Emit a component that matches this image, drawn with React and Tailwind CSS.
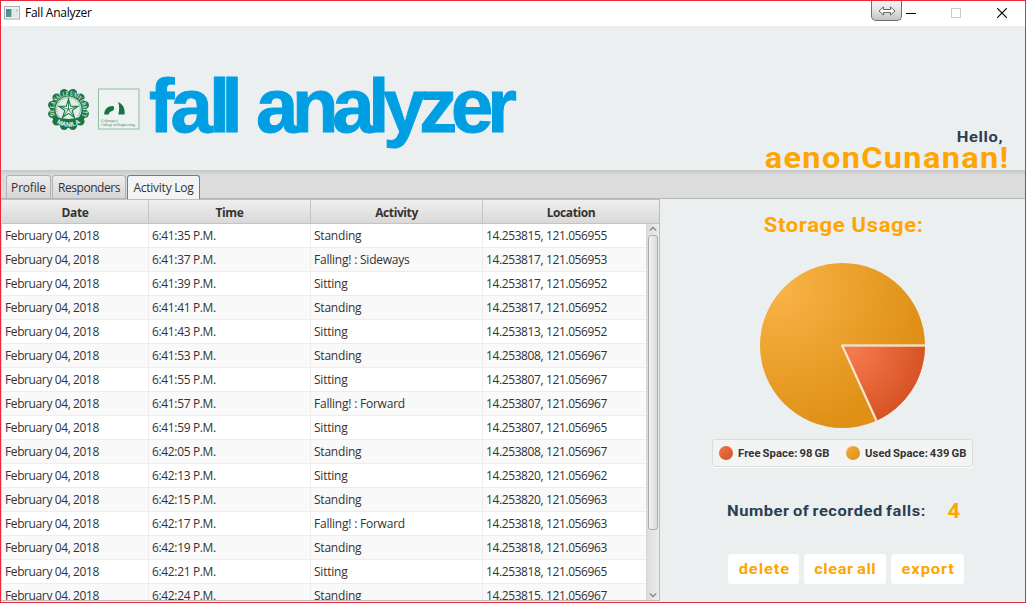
const ROWS = [
  ['6:41:35 P.M.', 'Standing', '14.253815, 121.056955'],
  ['6:41:37 P.M.', 'Falling! : Sideways', '14.253817, 121.056953'],
  ['6:41:39 P.M.', 'Sitting', '14.253817, 121.056952'],
  ['6:41:41 P.M.', 'Standing', '14.253817, 121.056952'],
  ['6:41:43 P.M.', 'Sitting', '14.253813, 121.056952'],
  ['6:41:53 P.M.', 'Standing', '14.253808, 121.056967'],
  ['6:41:55 P.M.', 'Sitting', '14.253807, 121.056967'],
  ['6:41:57 P.M.', 'Falling! : Forward', '14.253807, 121.056967'],
  ['6:41:59 P.M.', 'Sitting', '14.253807, 121.056965'],
  ['6:42:05 P.M.', 'Standing', '14.253808, 121.056967'],
  ['6:42:13 P.M.', 'Sitting', '14.253820, 121.056962'],
  ['6:42:15 P.M.', 'Standing', '14.253820, 121.056963'],
  ['6:42:17 P.M.', 'Falling! : Forward', '14.253818, 121.056963'],
  ['6:42:19 P.M.', 'Standing', '14.253818, 121.056963'],
  ['6:42:21 P.M.', 'Sitting', '14.253818, 121.056965'],
  ['6:42:24 P.M.', 'Standing', '14.253815, 121.056967'],
];

function AppIcon() {
  return (
    <svg width="16" height="14" viewBox="0 0 16 14">
      <defs>
        <linearGradient id="app" x1="0" y1="0" x2="1" y2="1">
          <stop offset="0" stopColor="#4f86a8" />
          <stop offset="1" stopColor="#4fa36c" />
        </linearGradient>
      </defs>
      <rect x="0.5" y="0.5" width="15" height="12.5" fill="#f1f3f3" stroke="#a9adad" />
      <rect x="2" y="3" width="5.5" height="8" fill="url(#app)" />
      <rect x="8.5" y="3" width="3" height="8" fill="#e0e5e7" />
      <rect x="12" y="3" width="2" height="3" fill="#b9d3ea" />
      <rect x="12" y="6" width="2" height="5" fill="#dfeadf" />
    </svg>
  );
}

function TitleBar() {
  return (
    <div className="flex h-[25px] shrink-0 items-start bg-white">
      <div className="mt-[5px] ml-[3px]"><AppIcon /></div>
      <span className="mt-[3px] ml-[5px] text-[12px] leading-[18px] tracking-[-0.25px] text-black">Fall Analyzer</span>
      <div className="ml-auto flex h-[20px] w-[31px] items-center justify-center rounded-b-[5px] border border-t-0 border-[#6f6f6f] bg-linear-to-b from-[#f4f4f4] via-[#e2e2e2] to-[#c4c4c4]">
        <svg width="18" height="10" viewBox="0 0 18 10" fill="#fff" stroke="#666" strokeWidth="1">
          <path d="M1 5 L5.5 1 V3.5 H12.5 V1 L17 5 L12.5 9 V6.5 H5.5 V9 Z" />
        </svg>
      </div>
      <svg className="ml-[4px]" width="10" height="25" viewBox="0 0 10 25"><path d="M0 12.5H10" stroke="#000" /></svg>
      <svg className="ml-[35px]" width="10" height="25" viewBox="0 0 10 25"><rect x="0.5" y="7.5" width="9" height="9" fill="none" stroke="#ccc" /></svg>
      <svg className="mr-[18px] ml-[36px]" width="10" height="25" viewBox="0 0 10 25"><path d="M0.2 7.2L9.8 16.8M9.8 7.2L0.2 16.8" stroke="#000" strokeWidth="1.1" /></svg>
    </div>
  );
}

function Seal() {
  const petals = Array.from({ length: 12 }, (_, i) => {
    const a = (i * Math.PI) / 6 + Math.PI / 12;
    return [21 + 16.8 * Math.cos(a), 21 + 16.8 * Math.sin(a)];
  });
  return (
    <svg width="42" height="42" viewBox="0.5 -0.5 42 42">
      <defs>
        <path id="arcTop" d="M7.4 27 A14.6 14.6 0 1 1 34.6 27" />
        <path id="arcBottom" d="M6 31.500 A20 20 0 0 0 36 31.500" />
      </defs>
      {petals.map(([x, y]) => <circle key={x + '-' + y} cx={x} cy={y} r="4.2" fill="#1a7744" />)}
      <circle cx="21" cy="21" r="18.2" fill="#1a7744" />
      <text fontSize="6.500" fontWeight="700" fill="#e6f0eb" fontFamily="Liberation Serif, serif" textLength="57" lengthAdjust="spacingAndGlyphs"><textPath href="#arcTop">DE LA SALLE UNIVERSITY</textPath></text>
      <circle cx="21" cy="21" r="13" fill="#e3ece8" />
      <circle cx="21" cy="21" r="11.8" fill="none" stroke="#5f9f7b" strokeWidth="1" strokeDasharray="1.2 0.8" />
      <path d="M5 27 Q21 34 37 27 L34 34.500 Q21 43 8 34.500 Z" fill="#1a7744" />
      <text fontSize="6.500" fontWeight="700" fill="#edf4f0" fontFamily="Liberation Sans, sans-serif"><textPath href="#arcBottom" startOffset="50%" textAnchor="middle">MANILA</textPath></text>
      <path d="M21 10.500 L23.200 17.800 L30.500 17.800 L24.600 22 L27 29 L21 24.800 L15 29 L17.400 22 L11.500 17.800 L18.800 17.800 Z" fill="#f2f7f4" stroke="#1a7744" strokeWidth="1.100" />
      <path d="M21 12V21L29 18M21 21L26 27.5M21 21L16 27.5M21 21L13 18" stroke="#1a7744" strokeWidth="0.9" fill="none" />
    </svg>
  );
}

function CollegeLogo() {
  return (
    <svg width="42" height="42" viewBox="0 0 42 42">
      <rect x="0.5" y="1" width="40.500" height="40" fill="#eef2f1" stroke="#8fbda5" strokeWidth="1" />
      <path d="M6.3 26.5 C6 21 10.500 17.500 15.500 18 C16.800 20.500 16 22.500 13.500 23.300 C11.500 24 11 25 10.800 26.500 Z" fill="#15743f" />
      <path d="M20.200 14 C25.500 16.500 27.300 21.500 26.500 26.500 H20.300 C21.500 22.500 21.500 18 20.200 14 Z" fill="#15743f" />
      <text x="3" y="33.500" fontSize="3.600" fill="#3c8a5f" fontFamily="Liberation Serif, serif" textLength="17">Gokongwei</text>
      <text x="3" y="37.500" fontSize="3.800" fill="#3c8a5f" fontFamily="Liberation Serif, serif" textLength="34">College of Engineering</text>
    </svg>
  );
}

function Header() {
  return (
    <header className="flex h-[144px] shrink-0 items-start justify-between">
      <div className="flex items-start">
        <div className="mt-[62px] ml-[47px] flex gap-[8px]">
          <Seal />
          <CollegeLogo />
        </div>
        <h1 className="mt-[36px] ml-[9px] flex font-['Liberation_Sans',sans-serif] text-[76px] leading-[88px] font-bold whitespace-pre text-[#009fe3] [-webkit-text-stroke:1px_#009fe3]">
          <span className="tracking-[-3.800px]">fa</span>
          <span className="tracking-[-8.600px]">ll</span>
          <span className="ml-[7px] tracking-[-6.200px]"> analyzer</span>
        </h1>
      </div>
      <div className="mt-[101px] flex flex-col items-end font-['Roboto',sans-serif] font-bold">
        <span className="mr-[22px] origin-right scale-x-[1.1] text-[15px] leading-[20px] tracking-[0.550px] text-[#2c3e50]">Hello,</span>
        <span className="mr-[15px] origin-right scale-x-[1.1] text-[29.500px] leading-[22px] tracking-[1.250px] text-[#ffa500]">aenonCunanan!</span>
      </div>
    </header>
  );
}

const TAB = 'h-[23px] rounded-t-[3px] border border-b-0 text-[12px] leading-[24px] text-[#333] flex justify-center';

function Tabs() {
  return (
    <nav className="flex h-[29px] shrink-0 items-end gap-px border-b border-[#b5b5b5] bg-linear-to-b from-[#c8c8c8] from-0% via-[#dcdcdc] via-20% to-[#dcdcdc] pl-[5px] tracking-[-0.430px]">
      <div className={TAB + ' w-[45px] border-[#b2b2b2] bg-linear-to-b from-[#eee] to-[#d6d6d6] tracking-[-0.2px]'}>Profile</div>
      <div className={TAB + ' w-[74px] border-[#b2b2b2] bg-linear-to-b from-[#eee] to-[#d6d6d6]'}>Responders</div>
      <div className={TAB + ' -mb-px h-[24px] w-[73px] border-[#1e98c8] bg-[#f4f4f4] tracking-[-0.250px]'}>Activity Log</div>
    </nav>
  );
}

const COLS = 'grid-cols-[147px_162px_172px_1fr]';

function LogTable() {
  return (
    <section className="flex w-[659px] flex-col border border-[#bdbdbd] border-l-[#ddd] bg-white text-[12px] text-[#333]">
      <div className={'grid h-[24px] shrink-0 border-b border-[#c4c4c4] bg-linear-to-b from-[#efefef] to-[#d9d9d9] text-center leading-[26px] font-bold tracking-[-0.400px] ' + COLS}>
        <div className="h-[23px] border-r border-[#c4c4c4]">Date</div>
        <div className="h-[23px] border-r border-[#c4c4c4]">Time</div>
        <div className="h-[23px] border-r border-[#c4c4c4]">Activity</div>
        <div className="h-[23px]">Location</div>
      </div>
      <div className="flex min-h-0 grow">
        <div className="w-[644px] overflow-hidden">
          {ROWS.map(([time, activity, location], i) => (
            <div key={time} className={'grid h-[24px] grid-rows-[23px] border-b border-[#ededed] leading-[23px] ' + COLS + (i % 2 ? ' bg-[#f9f9f9]' : ' bg-white')}>
              <div className="border-r border-[#ededed] pl-[3px] tracking-[-0.390px]">February 04, 2018</div>
              <div className="border-r border-[#ededed] pl-[3px] tracking-[-0.350px]">{time}</div>
              <div className="border-r border-[#ededed] pl-[3px] tracking-[-0.220px]">{activity}</div>
              <div className="pl-[3px] tracking-[-0.390px]">{location}</div>
            </div>
          ))}
        </div>
        <div className="flex w-[13px] flex-col items-center justify-between border-l border-[#d5d5d5] bg-linear-to-r from-[#dedede] to-[#ececec]">
          <svg width="8" height="11" viewBox="0 0 8 11"><path d="M0.800 6.500L4 3.500L7.200 6.500" fill="none" stroke="#8a8a8a" strokeWidth="1.300" /></svg>
          <div className="mb-auto h-[295px] w-[10px] rounded-[3px] border border-[#acacac] bg-linear-to-r from-[#f3f3f3] to-[#dadada]" />
          <svg width="8" height="11" viewBox="0 0 8 11"><path d="M0.800 4.500L4 7.500L7.200 4.500" fill="none" stroke="#8a8a8a" strokeWidth="1.300" /></svg>
        </div>
      </div>
    </section>
  );
}

function Pie() {
  const a = ((98 / 537) * 360 * Math.PI) / 180;
  const x = 83 + 82.5 * Math.cos(a);
  const y = 83 + 82.5 * Math.sin(a);
  return (
    <svg width="166" height="166" viewBox="-0.5 -0.5 166 166">
      <defs>
        <radialGradient id="used" gradientUnits="userSpaceOnUse" cx="18" cy="24" r="148">
          <stop offset="0" stopColor="#f9b448" />
          <stop offset="1" stopColor="#df9015" />
        </radialGradient>
        <radialGradient id="free" gradientUnits="userSpaceOnUse" cx="92" cy="88" r="76">
          <stop offset="0" stopColor="#f67b50" />
          <stop offset="1" stopColor="#d65122" />
        </radialGradient>
      </defs>
      <circle cx="83" cy="83" r="82.5" fill="url(#used)" />
      <path d={`M83 83 H165.5 A82.5 82.5 0 0 1 ${x} ${y} Z`} fill="url(#free)" />
      <path d="M82 83H165.500" stroke="#f1dcc0" strokeWidth="2.400" />
      <path d={`M82.500 82.500L${x} ${y}`} stroke="#f6e6cf" strokeWidth="2.200" />
    </svg>
  );
}

const BUTTON = 'h-[30px] rounded-[3px] bg-white pl-px text-center text-[15px] leading-[30px] text-[#ffa500]';
const WIDE = 'inline-block scale-x-[1.1] whitespace-nowrap';

function Summary() {
  return (
    <aside className="flex w-[365px] flex-col items-center font-['Roboto',sans-serif] font-bold">
      <h2 className="mt-[13px] ml-[2px] scale-x-[1.1] text-[20px] leading-[26px] tracking-[0.600px] text-[#ffa500]">Storage Usage:</h2>
      <div className="mt-[24px] mr-px"><Pie /></div>
      <div className="mt-[11px] flex h-[28px] w-[261px] items-center rounded-[3px] border border-[#dcdcdc] bg-[#f4f4f4] pl-[6px] text-[10.500px] tracking-[0.100px] [word-spacing:-0.900px] whitespace-nowrap text-[#333] shadow-[0_1px_0_#fff]">
        <i className="h-[14px] w-[14px] rounded-full bg-linear-to-br from-[#f0754c] to-[#d65122]" />
        <span className="mt-px ml-[5px] w-[108px] origin-left scale-x-[1.070]">Free Space: 98 GB</span>
        <i className="h-[14px] w-[14px] rounded-full bg-linear-to-br from-[#f4ae40] to-[#db8d14]" />
        <span className="mt-px ml-[5px] origin-left scale-x-[1.070]">Used Space: 439 GB</span>
      </div>
      <div className="mt-[31px] flex h-[26px] w-[233px] items-center justify-between whitespace-nowrap">
        <span className="ml-px origin-left scale-x-[1.1] text-[15px] tracking-[0.480px] [word-spacing:-1.200px] text-[#2c3e50]">Number of recorded falls:</span>
        <span className="scale-x-[1.1] text-[20px] text-[#ffa500]">4</span>
      </div>
      <div className="mt-[30px] ml-[7px] flex gap-[5px]">
        <button className={BUTTON + ' w-[71px]'}><span className={WIDE + ' tracking-[0.800px]'}>delete</span></button>
        <button className={BUTTON + ' w-[82px]'}><span className={WIDE + ' tracking-[0.500px] [word-spacing:-1.200px]'}>clear all</span></button>
        <button className={BUTTON + ' w-[73px]'}><span className={WIDE + ' tracking-[0.800px]'}>export</span></button>
      </div>
    </aside>
  );
}

export default function App() {
  return (
    <div className="flex h-[603px] w-[1026px] flex-col overflow-hidden border border-[#ea2a3a] bg-[#ebeff0] font-['Open_Sans',sans-serif]">
      <TitleBar />
      <Header />
      <Tabs />
      <main className="flex min-h-0 grow pb-px">
        <LogTable />
        <Summary />
      </main>
    </div>
  );
}
